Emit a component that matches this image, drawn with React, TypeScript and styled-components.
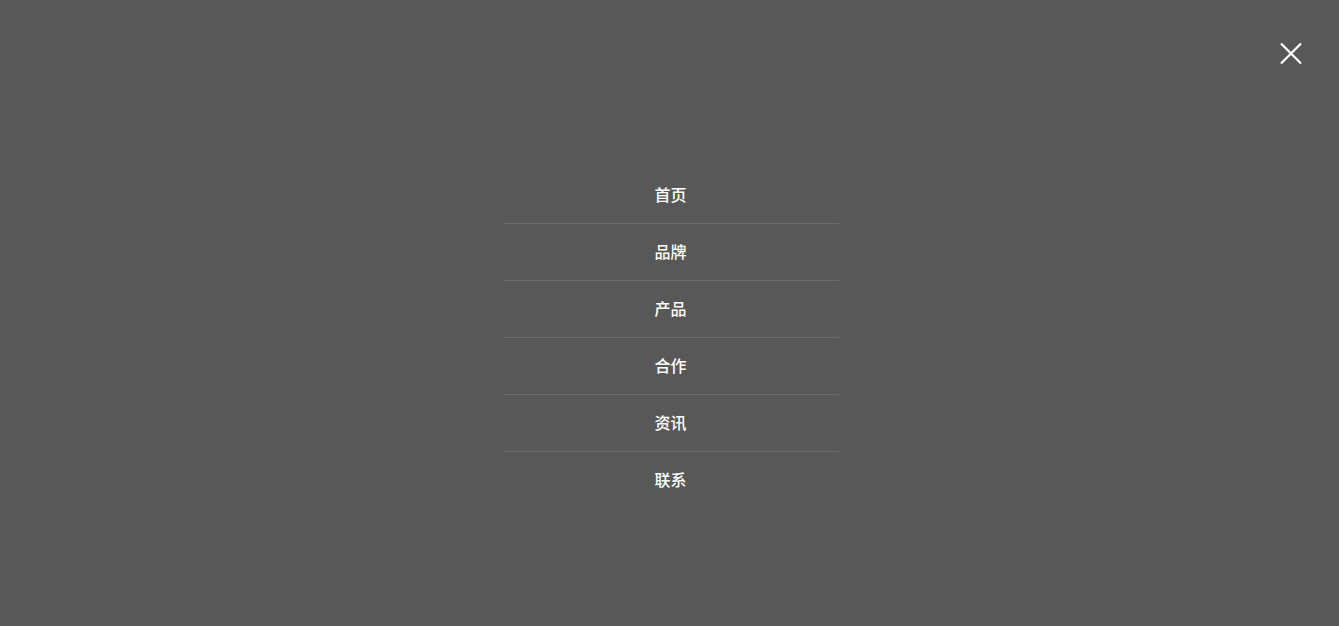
import React from "react";
import styled, { createGlobalStyle } from "styled-components";

const Global = createGlobalStyle`
  html, body { margin: 0; padding: 0; background: #585858; }
  body { font-family: "Noto Sans CJK SC", "Liberation Sans", sans-serif; }
`;

const Overlay = styled.div`
  position: relative;
  width: 100%;
  height: 626px;
  background: #585858;
  display: flex;
  flex-direction: column;
  align-items: center;
  padding-top: 167px;
  box-sizing: border-box;
  overflow: hidden;
`;

const Menu = styled.ul`
  list-style: none;
  margin: 0 0 0 2px;
  padding: 0;
  width: 336px;
`;

const Item = styled.li<{ $last?: boolean }>`
  height: 56px;
  box-sizing: border-box;
  padding-bottom: 2px;
  display: flex;
  align-items: center;
  justify-content: center;
  border-bottom: 1px solid ${(p) => (p.$last ? "transparent" : "#6c6c6c")};
  color: #ffffff;
  font-size: 16px;
  font-weight: 500;
  line-height: 1;
  letter-spacing: 0;
  height: 57px;
`;

const CloseButton = styled.button`
  position: absolute;
  top: 41px;
  right: 36px;
  width: 24px;
  height: 25px;
  padding: 0;
  border: 0;
  background: transparent;
  display: flex;
  align-items: center;
  justify-content: center;
  cursor: pointer;
`;

const items = ["首页", "品牌", "产品", "合作", "资讯", "联系"];

export default function App() {
  return (
    <>
      <Global />
      <Overlay>
        <CloseButton aria-label="关闭">
          <svg width="24" height="25" viewBox="0 0 24 25">
            <path d="M2 2.5 L22 22.5 M22 2.5 L2 22.5" stroke="#ffffff" strokeWidth="2.2" fill="none" />
          </svg>
        </CloseButton>
        <Menu>
          {items.map((t, i) => (
            <Item key={t} $last={i === items.length - 1}>
              {t}
            </Item>
          ))}
        </Menu>
      </Overlay>
    </>
  );
}
